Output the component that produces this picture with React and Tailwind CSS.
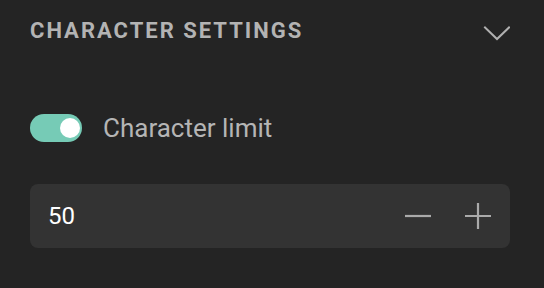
export default function App() {
  return (
    <div className="w-[544px] h-[288px] bg-[#242424] pl-[30px] pr-[34px] overflow-hidden" style={{ fontFamily: "Roboto, 'Liberation Sans', sans-serif" }}>
      <div className="h-[62px] flex items-center justify-between">
        <span className="text-[22px] font-bold tracking-[2px] text-[#b3b3b3] leading-none">CHARACTER SETTINGS</span>
        <svg width="28" height="28" viewBox="0 0 28 28" className="mt-[3px]" fill="none" stroke="#b0b0b0" strokeWidth="2" strokeLinecap="square">
          <path d="M3 8.5 L15 20 L27 8.5" />
        </svg>
      </div>
      <div className="mt-[52px] h-[28px] flex items-center gap-[21px]">
        <div className="w-[52px] h-[28px] rounded-full bg-[#76cbb6] flex items-center justify-end px-[2px]">
          <div className="w-[20px] h-[20px] rounded-full bg-white" />
        </div>
        <span className="text-[26px] text-[#b5b5b5] leading-none">Character limit</span>
      </div>
      <div className="mt-[42px] h-[64px] rounded-[8px] bg-[#333333] flex items-center justify-between pl-[18px] pr-[19px]">
        <span className="text-[24px] text-white leading-none">50</span>
        <div className="flex items-center gap-[34px]">
          <svg width="26" height="26" viewBox="0 0 26 26" fill="none" stroke="#aaaaaa" strokeWidth="2.2">
            <path d="M0 13 H26" />
          </svg>
          <svg width="26" height="26" viewBox="0 0 26 26" fill="none" stroke="#aaaaaa" strokeWidth="2.2">
            <path d="M0 13 H26 M13 0 V26" />
          </svg>
        </div>
      </div>
    </div>
  );
}
